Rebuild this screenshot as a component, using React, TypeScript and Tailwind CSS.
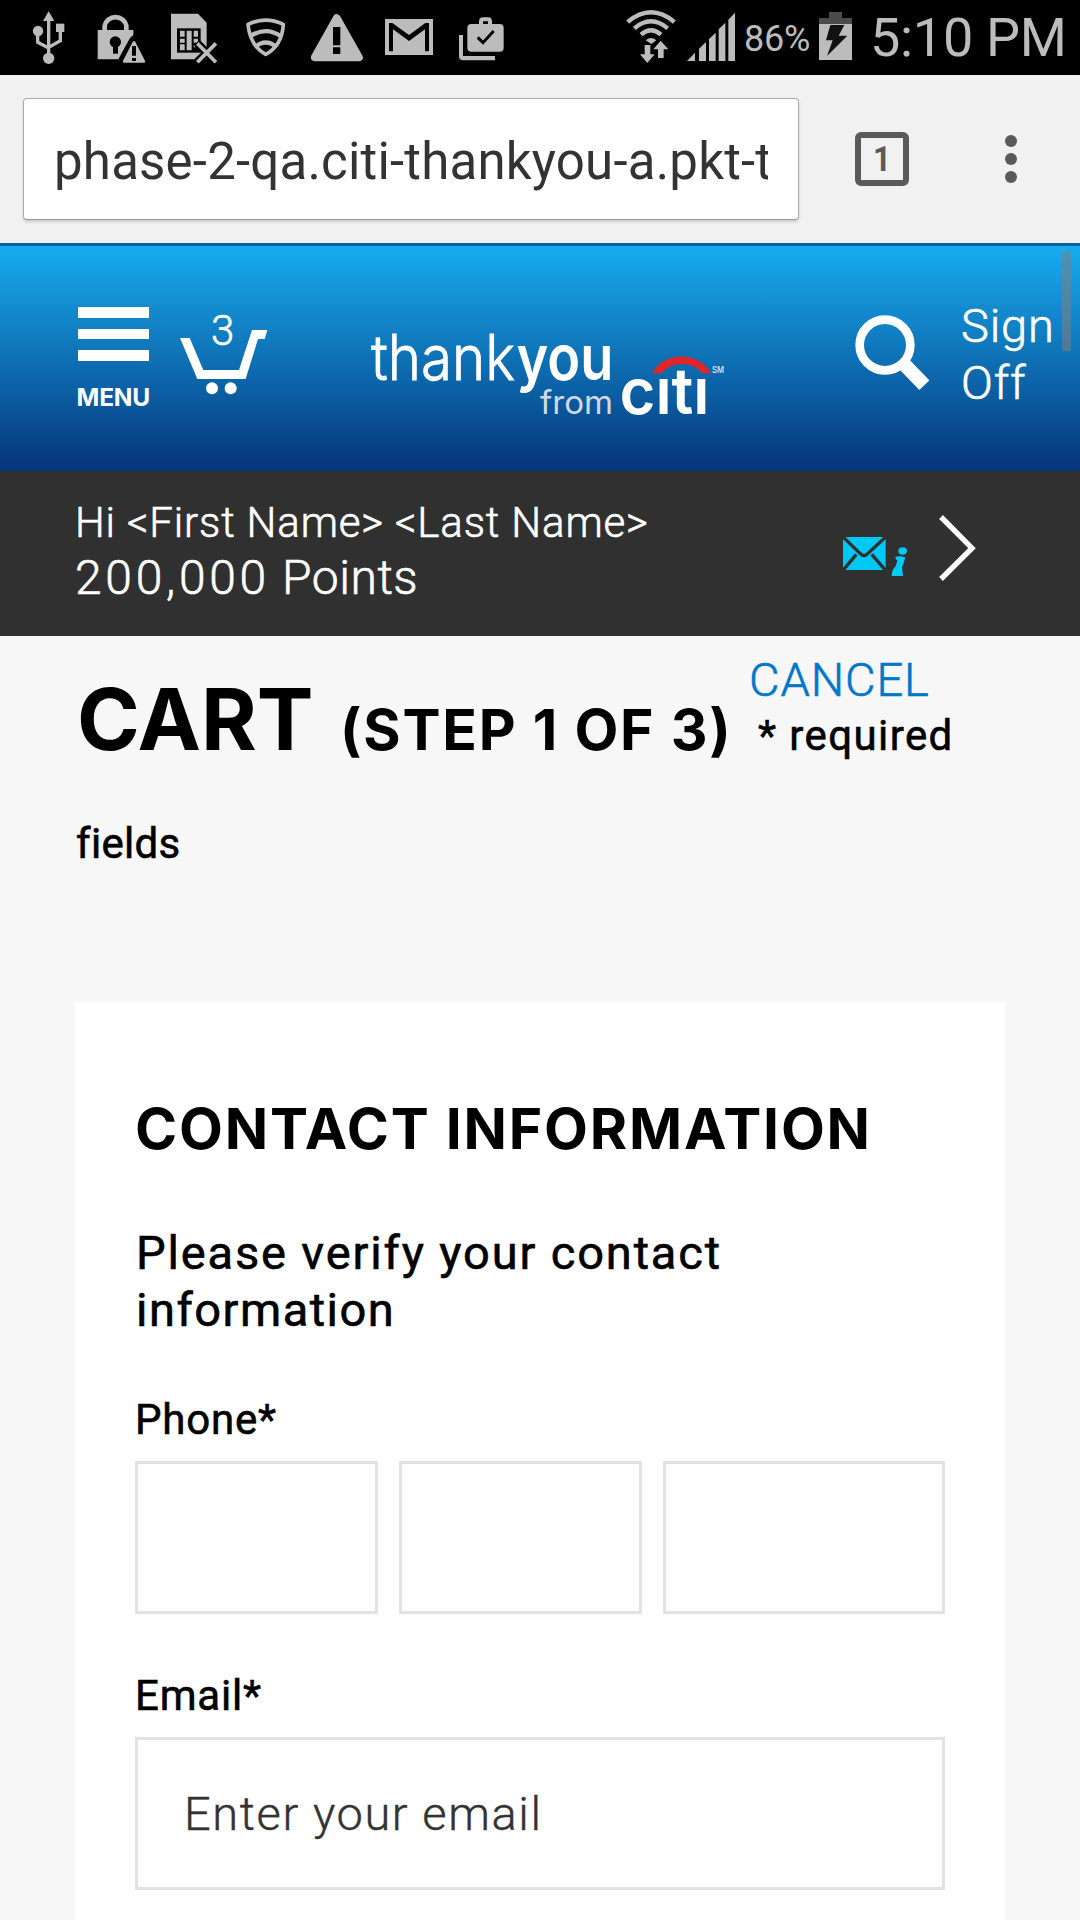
const ICON = "#bcbcbc";

function StatusBar() {
  return (
    <div className="flex h-[75px] items-start bg-black pl-8">
      <svg className="h-[75px] w-[33px]" viewBox="96 0 99 225" fill="none" stroke={ICON} strokeWidth="10">
        <path d="M146 55V175M113 95V127L146 144M181 90V122L146 142" />
        <path d="M146 34l17 29h-34z" fill={ICON} stroke="none" />
        <circle cx="114" cy="93" r="15.500" fill={ICON} stroke="none" />
        <circle cx="146" cy="175" r="17" fill={ICON} stroke="none" />
        <path d="M168 71h25v25h-25z" fill={ICON} stroke="none" />
      </svg>
      <svg className="ml-8 h-[75px] w-[49px]" viewBox="291 0 147 225">
        <path d="M314 96V77a33 31 0 0 1 65 0V96" fill="none" stroke={ICON} strokeWidth="14" />
        <path d="M293 90H400V106Q392 110 387 119L355 178H293z" fill={ICON} />
        <circle cx="346" cy="126" r="17" fill="#000" />
        <path d="M339 138h15v23h-15z" fill="#000" />
        <path d="M402 128L431 184H373z" fill={ICON} stroke={ICON} strokeWidth="9" strokeLinejoin="round" />
        <path d="M396 138h12v29h-12zM396 174h12v9h-12z" fill="#000" />
      </svg>
      <svg className="ml-6 h-[75px] w-[48px]" viewBox="510 0 144 225">
        <path d="M513 41H594L620 68V178H513z" fill={ICON} />
        <path d="M531 85H602V158H531z" fill="#000" />
        <path d="M540 92h14v18h-14zM540 116h14v12h-14zM540 133h14v18h-14zM560 92h15v59h-15zM581 92h13v18h-13zM581 116h13v12h-13zM581 134h6v8h-6z" fill={ICON} />
        <path d="M590 128L650 188M650 128L590 188" stroke="#000" strokeWidth="24" />
        <path d="M596 134L644 183M644 134L596 183" stroke={ICON} strokeWidth="11" strokeLinecap="square" />
      </svg>
      <svg className="ml-7 h-[75px] w-[40px]" viewBox="738 0 120 225" fill="none" stroke={ICON} strokeWidth="11" strokeLinejoin="round">
        <path d="M744 73Q797 48 850 73Q846 137 797 163Q750 137 744 73z" />
        <path d="M750 109Q797 78 844 109M764 142Q797 113 830 142" strokeWidth="13" />
      </svg>
      <svg className="ml-6 h-[75px] w-[54px]" viewBox="150 0 162 225">
        <path d="M230 54L297 172H164z" fill={ICON} stroke={ICON} strokeWidth="23" strokeLinejoin="round" />
        <path d="M219 81h22v55h-22zM219 142h22v20h-22z" fill="#000" />
      </svg>
      <svg className="ml-[21px] h-[75px] w-12" viewBox="375 0 144 225">
        <path d="M375 57h144v108H375z" fill={ICON} />
        <path d="M387 154V69H397L447 105L496 69H507V154H495V88L447 123L399 88V154z" fill="#000" />
      </svg>
      <svg className="ml-[25px] h-[75px] w-[46px]" viewBox="594 0 138 225">
        <path d="M597 105H609V168H705V181H609Q597 181 597 169z" fill={ICON} />
        <rect x="622" y="72" width="109" height="83" rx="12" fill={ICON} />
        <path d="M663 74V65Q663 58 670 58H684Q690 58 690 65V74" fill="none" stroke={ICON} strokeWidth="12" />
        <path d="M653 112L669 128L701 93" fill="none" stroke="#000" strokeWidth="9" />
      </svg>
      <svg className="ml-[122px] h-[75px] w-[50px]" viewBox="78 0 150 225">
        <g fill="none" stroke={ICON} strokeWidth="13">
          <path d="M83 66Q153 8 223 66" />
          <path d="M103 85Q153 43 203 85" />
          <path d="M123 104Q153 78 183 104" />
        </g>
        <path d="M137 121Q153 107 169 121L154 132z" fill={ICON} />
        <path d="M134 135h17v28h13l-22 26l-22-26h14zM182 122l23 26h-14v26h-17v-26h-14z" fill={ICON} />
      </svg>
      <svg className="ml-[11px] h-[75px] w-12" viewBox="261 0 144 225" fill={ICON}>
        <path d="M261 183L285 158V183zM297 183V146L318 126V183zM327 183V117L347 98V183zM356 183V88L376 68V183zM385 183V59L405 38V183z" />
      </svg>
      <span className="ml-[9px] w-[66px] whitespace-nowrap pt-0.5 text-[36px] leading-[75px] tracking-[-0.2px] text-[#bcbcbc]">86%</span>
      <svg className="ml-[9px] h-[75px] w-[33px]" viewBox="657 0 99 225">
        <path d="M687 36h39v18h30v18h-99V54h30z" fill="#4b4b4b" />
        <path d="M657 72h99v108h-99z" fill={ICON} />
        <path d="M691 75H733L716 107H742L681 168L698 121H678z" fill="#111" />
      </svg>
      <span className="ml-[18px] whitespace-nowrap text-[54px] leading-[75px] tracking-[-0.3px] text-[#bcbcbc]">5:10 PM</span>
    </div>
  );
}

function BrowserBar() {
  return (
    <div className="flex h-[168px] items-start bg-[#f1f1f1]">
      <div className="mt-[23px] ml-[23px] h-[122px] w-[776px] rounded-[4px] border border-[#ababab] border-b-[#999] bg-white pl-[30px] shadow-[0_2px_3px_rgba(0,0,0,0.15)]">
        <div className="w-[714px] overflow-hidden whitespace-nowrap text-[51px] leading-[125px] tracking-[0.2px] text-[#333]">
          phase-2-qa.citi-thankyou-a.pkt-t
        </div>
      </div>
      <div className="mt-[57px] ml-[56px] flex h-[54px] w-[54px] items-center justify-center rounded-[6px] border-[6px] border-[#5a5a5a] text-[35px] font-bold leading-none text-[#5a5a5a]">
        <span className="scale-x-90">1</span>
      </div>
      <div className="mt-[60px] ml-[96px] flex flex-col gap-[6px]">
        <i className="size-3 rounded-full bg-[#5a5a5a]" />
        <i className="size-3 rounded-full bg-[#5a5a5a]" />
        <i className="size-3 rounded-full bg-[#5a5a5a]" />
      </div>
    </div>
  );
}

function Logo() {
  return (
    <svg className="mt-16 ml-[82px] h-[120px] w-[400px]" viewBox="350 310 400 120" fontFamily="Inter, sans-serif">
      <text x="371" y="380" fontSize="63" fontWeight="300" fill="#fff" stroke="#fff" strokeWidth="0.8" textLength="144" lengthAdjust="spacingAndGlyphs">thank</text>
      <text x="516.500" y="380" fontSize="63" fontWeight="600" fill="#fff" textLength="97" lengthAdjust="spacingAndGlyphs">you</text>
      <text x="540" y="413.500" fontSize="32" fontWeight="400" fill="#d3d9e4" textLength="73" lengthAdjust="spacingAndGlyphs">from</text>
      <text x="619.500" y="413.500" fontSize="64" fontWeight="600" fill="#fff" textLength="90" lengthAdjust="spacingAndGlyphs">cıtı</text>
      <path d="M652 373.300C664 351 699 351 711 373.300H702C693 361 671 361 661.700 373.300z" fill="#e0262b" />
      <text x="712" y="373" fontSize="9" fontWeight="600" fill="#cfe0f0" textLength="12" lengthAdjust="spacingAndGlyphs">SM</text>
    </svg>
  );
}

function SiteHeader() {
  return (
    <header className="relative h-[228px] border-t-[3px] border-[#0062a0] bg-linear-to-b/srgb from-[#17adef] to-[#06347a] text-white">
      <div className="flex items-start">
        <div className="mt-[61px] ml-[78px] w-[71px]">
          <div className="flex flex-col gap-[11px]">
            <i className="h-[10.5px] bg-white" />
            <i className="h-[10.5px] bg-white" />
            <i className="h-[10.5px] bg-white" />
          </div>
          <div className="mt-[21.5px] -ml-[1.5px] whitespace-nowrap font-[Inter,sans-serif] text-[24.5px] font-bold leading-[30px] tracking-[-0.2px]">MENU</div>
        </div>
        <div className="relative mt-[67px] ml-[31px]">
          <svg className="h-[82px] w-[88px]" viewBox="390 99 264 246" fill="#fff">
            <path d="M390 174H419L460 270H567L606 150H652L644 177H624L587 297H442z" />
            <circle cx="486" cy="325" r="18" />
            <circle cx="542" cy="325" r="18" />
          </svg>
          <span className="absolute -top-[3px] left-[31px] text-[42px] font-light leading-[42px] [-webkit-text-stroke:0.6px_white]">3</span>
        </div>
        <Logo />
        <svg className="mt-[69px] ml-[105px] h-[75px] w-[74px]" viewBox="105 240 222 225">
          <circle cx="195" cy="330" r="76" fill="none" stroke="#fff" strokeWidth="26" />
          <path d="M240 405L270 376L328 436L298 465z" fill="#fff" />
        </svg>
        <div className="mt-[51px] ml-8 text-[47px] font-light leading-[57px] tracking-[0.8px] [-webkit-text-stroke:0.6px_white]">
          <div>Sign</div>
          <div>Off</div>
        </div>
      </div>
      <i className="absolute top-[6px] right-[9px] h-[99px] w-[9px] bg-[#808080]/55" />
    </header>
  );
}

function AccountBand() {
  return (
    <div className="flex h-[165px] items-start bg-[#303030] pl-[75px] font-light text-white">
      <div className="w-[767px] whitespace-nowrap pt-[27.5px] [-webkit-text-stroke:0.6px_white]">
        <div className="text-[42px] leading-[48px] tracking-[0.85px]">Hi &lt;First Name&gt; &lt;Last Name&gt;</div>
        <div className="mt-[3px] text-[48px] leading-[56px] tracking-[0.5px]">
          <span className="tracking-[3.7px]">200,000</span> Points
        </div>
      </div>
      <svg className="mt-[65px] h-[41px] w-[66.67px]" viewBox="126 138 200 123">
        <path d="M129 141H257V240H129z" fill="#00c8f5" />
        <path d="M129 141L180 190Q192 203 204 190L257 141" fill="none" stroke="#303030" strokeWidth="10" />
        <path d="M129 241L169 193M257 241L215 193" stroke="#303030" strokeWidth="10" />
        <ellipse cx="308" cy="183" rx="13" ry="11" fill="#00c8f5" />
        <path d="M286 200Q300 196 316 202Q312 220 306 232L309 258H275Q275 240 287 229L292 212Q286 208 286 200z" fill="#00c8f5" />
      </svg>
      <svg className="mt-[43px] ml-[29.33px] h-[68px] w-[39px]" viewBox="414 72 117 204" fill="none" stroke="#fff" strokeWidth="16">
        <path d="M423 81L516 174.500L423 267" />
      </svg>
    </div>
  );
}

const LABEL = "text-[42px] leading-[50px] tracking-[0.8px] [-webkit-text-stroke:0.6px_black]";
const FIELD = "border-[3px] border-[#e2e2e2] bg-white outline-none";

export default function App() {
  return (
    <div className="h-[1920px] w-[1080px] overflow-hidden bg-[#f7f7f7] font-[Roboto,sans-serif] text-black">
      <StatusBar />
      <BrowserBar />
      <SiteHeader />
      <AccountBand />
      <main>
        <div className="flex h-32 items-start whitespace-nowrap pl-[77px]">
          <h1 className="mt-[41px] w-[263px] font-[Inter,sans-serif] text-[85px] font-bold leading-[86px]">CART</h1>
          <h2 className="mt-[65px] w-[409px] font-[Inter,sans-serif] text-[57px] font-bold leading-[58px] tracking-[1.8px]">(STEP 1 OF 3)</h2>
          <div className="mt-4">
            <a className="block text-[47px] font-light leading-[56px] tracking-[0.9px] text-[#0077c8] [-webkit-text-stroke:0.6px_#0077c8]">CANCEL</a>
            <div className="mt-[2.5px] ml-[9px] text-[42px] leading-[50px] tracking-[1.4px] [-webkit-text-stroke:0.6px_black]">* required</div>
          </div>
        </div>
        <div className="mt-[54.5px] ml-[76px] text-[42px] leading-[50px] tracking-[0.3px] [-webkit-text-stroke:0.6px_black]">fields</div>
        <section className="mt-[133.5px] ml-[75px] h-[918px] w-[930px] bg-white px-[60px] pt-[97px]">
          <h3 className="whitespace-nowrap font-[Inter,sans-serif] text-[57px] font-bold leading-[60px] tracking-[1.8px]">CONTACT INFORMATION</h3>
          <p className="mt-[64.5px] pl-px text-[47px] leading-[57px] tracking-[1.85px] [-webkit-text-stroke:0.6px_black]">
            Please verify your contact
            <br />
            <span className="tracking-[1.5px]">information</span>
          </p>
          <div className="mt-[57px]">
            <div className={LABEL}>Phone*</div>
            <div className="mt-4 flex gap-[21px]">
              <input className={`${FIELD} h-[153px] w-[243px]`} />
              <input className={`${FIELD} h-[153px] w-[243px]`} />
              <input className={`${FIELD} h-[153px] w-[282px]`} />
            </div>
          </div>
          <div className="mt-[57px]">
            <div className={LABEL}>Email*</div>
            <input
              className={`${FIELD} mt-4 block h-[153px] w-[810px] pl-[46px] text-[47px] font-light tracking-[1.6px] placeholder:text-[#333] placeholder:opacity-100 [-webkit-text-stroke:0.4px_#333]`}
              placeholder="Enter your email"
            />
          </div>
        </section>
      </main>
    </div>
  );
}
